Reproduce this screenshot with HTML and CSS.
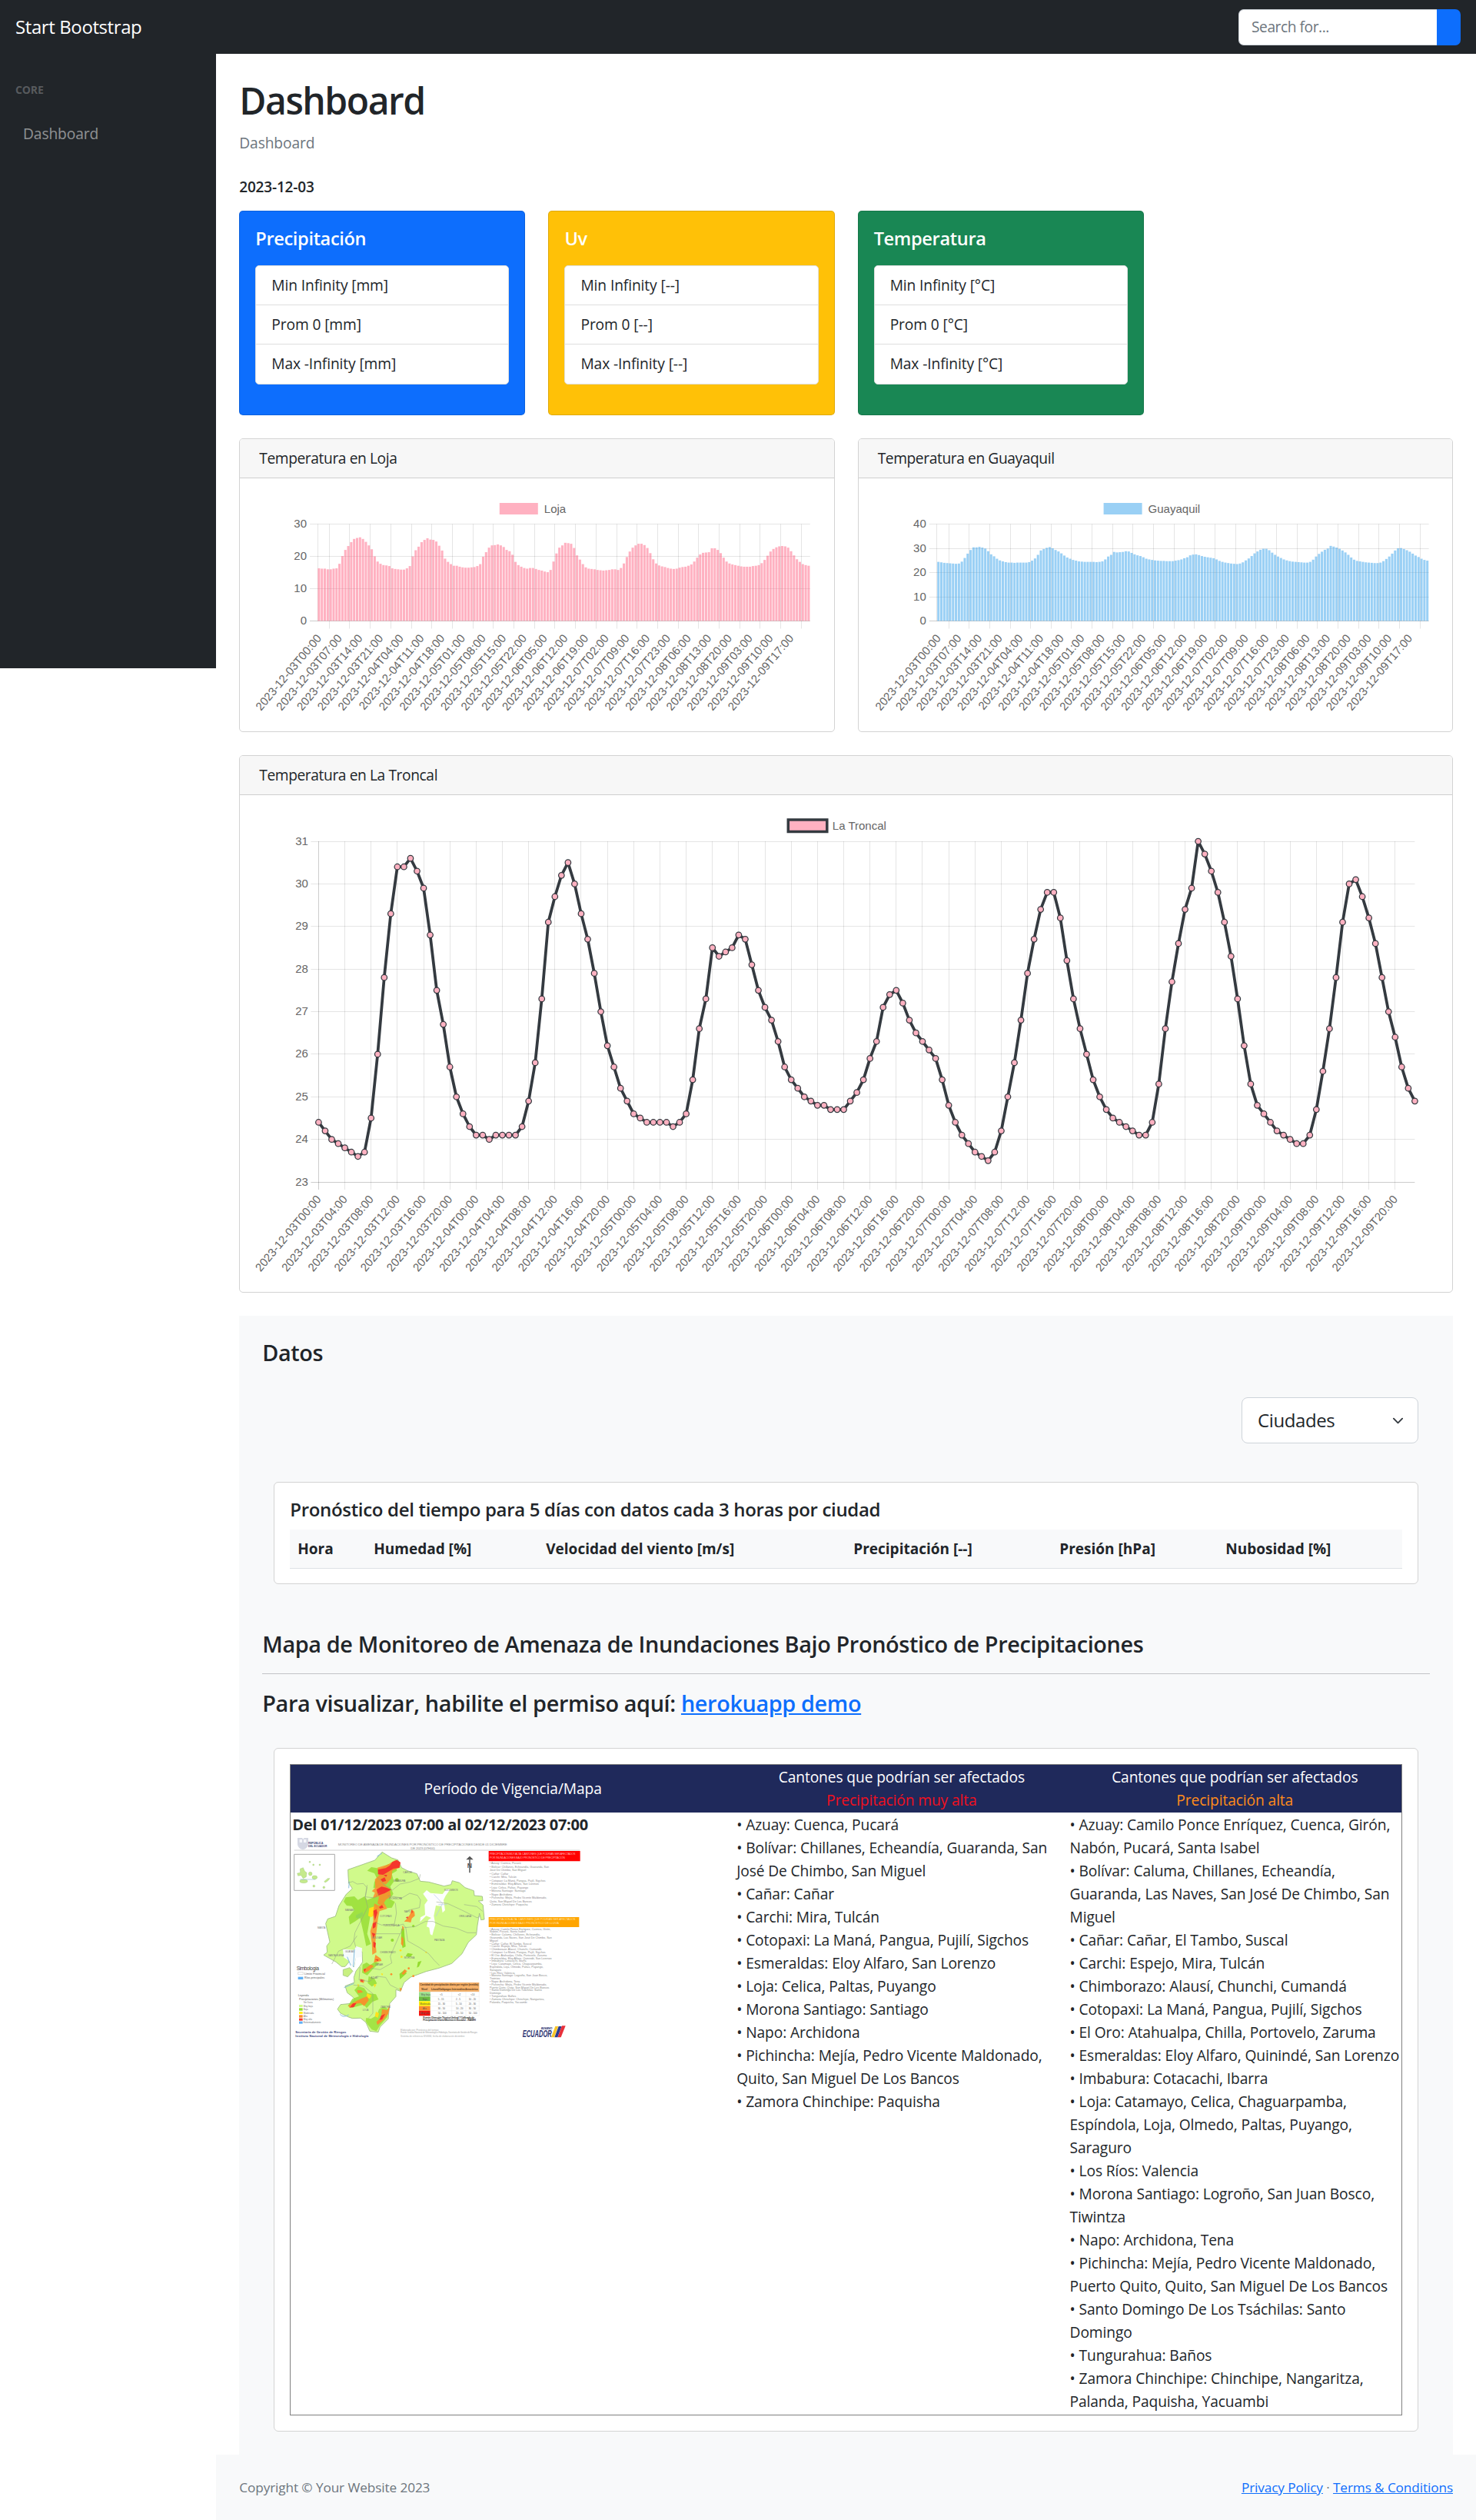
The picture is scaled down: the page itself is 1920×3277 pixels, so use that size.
FILE: index.html
```html
<!DOCTYPE html>
<html lang="es">
<head>
<meta charset="utf-8">
<title>Dashboard</title>
<link rel="stylesheet" href="styles.css">
</head>
<body>
<nav class="topnav">
  <a class="brand" href="#">Start Bootstrap</a>
  <form class="search">
    <input type="text" placeholder="Search for...">
    <button type="button" aria-label="Search"></button>
  </form>
</nav>
<div class="layout">
  <aside class="sidenav">
    <div class="sidenav-heading">Core</div>
    <a class="sidenav-link" href="#">Dashboard</a>
  </aside>
  <div class="content">
    <main>
      <h1>Dashboard</h1>
      <div class="breadcrumb">Dashboard</div>
      <h6>2023-12-03</h6>

      <div class="stats">
        <section class="stat stat-blue">
          <h5>Precipitación</h5>
          <ul><li>Min Infinity [mm]</li><li>Prom 0 [mm]</li><li>Max -Infinity [mm]</li></ul>
        </section>
        <section class="stat stat-yellow">
          <h5>Uv</h5>
          <ul><li>Min Infinity [--]</li><li>Prom 0 [--]</li><li>Max -Infinity [--]</li></ul>
        </section>
        <section class="stat stat-green">
          <h5>Temperatura</h5>
          <ul><li>Min Infinity [°C]</li><li>Prom 0 [°C]</li><li>Max -Infinity [°C]</li></ul>
        </section>
      </div>

      <div class="charts">
        <section class="card">
          <header>Temperatura en Loja</header>
          <div class="card-body"><svg id="loja" class="chart chart-bar"></svg></div>
        </section>
        <section class="card">
          <header>Temperatura en Guayaquil</header>
          <div class="card-body"><svg id="guayaquil" class="chart chart-bar"></svg></div>
        </section>
      </div>

      <section class="card card-wide">
        <header>Temperatura en La Troncal</header>
        <div class="card-body"><svg id="troncal" class="chart chart-line"></svg></div>
      </section>

      <section class="data">
        <h4>Datos</h4>
        <div class="city-select">
          <span>Ciudades</span>
          <svg viewBox="0 0 16 16" width="15" height="15"><path d="M2 5l6 6 6-6" fill="none" stroke="#343a40" stroke-width="2" stroke-linecap="round" stroke-linejoin="round"/></svg>
        </div>
        <div class="panel forecast">
          <h5>Pronóstico del tiempo para 5 días con datos cada 3 horas por ciudad</h5>
          <div class="forecast-head">
            <b>Hora</b><b>Humedad [%]</b><b>Velocidad del viento [m/s]</b><b>Precipitación [--]</b><b>Presión [hPa]</b><b>Nubosidad [%]</b>
          </div>
        </div>
        <h4>Mapa de Monitoreo de Amenaza de Inundaciones Bajo Pronóstico de Precipitaciones</h4>
        <hr>
        <h4 class="permit">Para visualizar, habilite el permiso aquí: <a href="#">herokuapp demo</a></h4>
        <div class="panel risk">
          <table>
            <thead>
              <tr>
                <th>Período de Vigencia/Mapa</th>
                <th>Cantones que podrían ser afectados<br><span class="very-high">Precipitación muy alta</span></th>
                <th>Cantones que podrían ser afectados<br><span class="high">Precipitación alta</span></th>
              </tr>
            </thead>
            <tbody>
              <tr>
                <td>
                  <b class="period">Del 01/12/2023 07:00 al 02/12/2023 07:00</b>
                  <svg class="map" viewBox="0 0 1125 795">
                    <!-- title strip -->
                    <path d="M18 6h18l4 5 4-5h16v26q-4 16-21 20-18-4-21-20z" fill="#d5d8e3"/>
                    <path d="M26 12h10v12H26zM42 12h10v12H42z" fill="#f5f6fa"/>
                    <g fill="#3c4474" font-size="10" font-weight="700"><text x="60" y="30">REPÚBLICA</text><text x="60" y="41">DEL ECUADOR</text></g>
                    <g fill="#8d8d8d" font-size="13"><text x="176" y="36" textLength="660">MONITOREO DE AMENAZA DE INUNDACIONES POR PRONÓSTICO DE PRECIPITACIONES DESDE 01 DICIEMBRE</text><text x="460" y="51" textLength="94">DE 2023 (07H00)</text></g>
                    <path d="M5 54H1120" stroke="#bbb" stroke-width="2"/>
                    <!-- Galápagos inset -->
                    <path d="M5 70H163V211H5z" fill="#fff" stroke="#a9a9a9" stroke-width="3"/>
                    <g fill="#c5ea8c" stroke="#8db86a" stroke-width="1"><path d="M28 127l12-5 6 14 8 6-2 16-12 6-8-12-12 2-3-10 12-2z"/><ellipse cx="42" cy="175" rx="15" ry="7"/><circle cx="68" cy="146" r="7"/><ellipse cx="85" cy="160" rx="10" ry="7"/><path d="M122 176l14-12 8 0-8 10-10 6z"/><circle cx="82" cy="194" r="4"/><circle cx="121" cy="199" r="4"/><circle cx="66" cy="100" r="3"/><circle cx="105" cy="111" r="3"/><circle cx="80" cy="111" r="3"/></g>
                    <path d="M28 168h60" stroke="#7aa9c9" stroke-width="1.5"/>
                    <!-- mainland -->
                    <path d="M215 130L320 93 348 61 385 84 410 92 424 122 447 134 484 146 497 175 530 178 590 194 617 188 622 173 650 181 672 200 706 212 708 231 739 234 741 251 724 252 742 268 747 324 734 326 728 300 720 348 716 384 684 414 660 458 620 496 570 514 520 527 460 549 434 570 420 604 402 598 402 625 378 652 374 690 372 712 340 744 333 764 300 760 285 726 264 709 232 710 215 704 186 690 174 674 186 656 226 652 243 636 228 622 212 610 204 584 240 570 238 550 246 526 262 505 272 490 270 450 246 462 238 510 222 486 204 508 190 508 168 490 120 463 134 452 132 428 144 412 128 340 136 322 166 312 180 270 208 226 232 204 218 182 216 156z" fill="#d0fa8b" stroke="#9aba80" stroke-width="2.5"/>
                    <path d="M196 520l26-8 12 14-20 22-18-6z" fill="#c8f081" stroke="#9aba80" stroke-width="2"/>
                    <path d="M195 440l45 3 6-15 24 8-2 34-22 4-8 36-22-26-18-12z" fill="#f6fafc"/>
                    <path d="M240 440l-4 70M212 470l14 34M200 590l38-16" stroke="#84bede" stroke-width="3" fill="none"/>
                    <path d="M246 308l26-14 2 14-14 12-14-2z" fill="#8cc9e8"/>
                    <path d="M328 78l20-12M220 176l-2 26M184 694q12 16 34 2" stroke="#8cc0dd" stroke-width="3" fill="none"/>
                    <!-- uncovered area -->
                    <path d="M508 224l14-14 15 11 47 4 14-18 16-1-18 26-8 16 6 40-10 10-4-26-22-2-8 40 6 34-6 20-6 22-8-4-4-26-10-4 6-26 12-8-20-8-24 24 2-18 18-10-2-40 12-16z" fill="#fdfefd"/>
                    <path d="M550 226l34 36-26 50M568 266h34" fill="none" stroke="#b5c9ea" stroke-width="2"/>
                    <!-- low / medium rain -->
                    <g fill="#94dc2e"><path d="M240 234l14 14 26-14 10 14 34-14 6-34-16 2 4-24 10-14-10-20-28-10 16-14 36 6 30-18 30 6 4 20-20 12 8 30-14 20 12 28-14 20 20 12-12 22-18 2-14-14-20 20-30 14-14 80 14 40-18 8-10-50-14-60-20 14-20 12-4-30 22-26-10-16-20-2-12-16 8-16z" opacity=".8"/><path d="M424 360l10 0 2 30 4 40-12 6-6-34z"/><circle cx="388" cy="405" r="6"/><circle cx="406" cy="170" r="7"/><circle cx="470" cy="350" r="5"/><path d="M448 455l20 4-10 12-18-4z"/><path d="M488 490l14-4-10 22-8 4z"/><path d="M272 500l16-8 14 10 20-14 14 6-24 24-22 24-20-10zM296 546l22 8 10 20-20 12-16-14zM240 600l14-16 24 8 14 20 32 4 10 20-24 10-22 24-12-14-44 12-18-6 18-28 26-10z" opacity=".8"/><path d="M286 708l18 4 24-14 8-24 20-10 18 12-6 30-30 34-12 20-18-6-16-20-8-14z" opacity=".75"/><path d="M416 536l18-14 10 12-26 24z"/></g>
                    <g fill="#ffe21a"><path d="M298 280l24-8 4 26-20 18-12-6z"/><path d="M290 612l16 8-6 14-14-8zM324 684l12 6-4 18-12-6zM344 534l8 2-4 8zM252 576l8 4-6 8zM316 576l10 2-8 12z"/><circle cx="420" cy="445" r="4"/><circle cx="520" cy="452" r="3"/><circle cx="424" cy="470" r="4"/></g>
                    <g fill="#fb8d2b"><path d="M330 122l40-12 30-18 18 8-2 22-28 12-4 30-22 24-14-6 30 22 4 30-20 14-14 24-18-10 6-28-24 6 8-20-12-6 14-14-2-32 16-16z" opacity=".85"/><path d="M318 262l18 8 20-10 12 22-30 10-6 30-6 50-4 40 4 40-16 10-2-46-6-46 12-40-2-24z" opacity=".85"/><path d="M322 462l20 14 4 10-30 6zM304 500l12 6-20 18-16 10-6-12zM262 556l18 4-4 12-14-4zM268 632l22-8 6 16-18 22-14-12-22 4-20 16-6-10 28-16zM250 600l16 0 8 8-20 4zM348 674l20 4 12-22-8 36-20 26-22 18-4-12 18-18zM464 284l10 10 2 16-12 10-4 16-10-2-16-2 12-12 10-14zM424 390l8 10-2 30-8-10zM426 348l8 8-6 14zM436 518l10 8-14 14-8-4zM416 590l10 4-6 12z" opacity=".92"/><circle cx="470" cy="545" r="4"/><circle cx="452" cy="515" r="4"/><circle cx="384" cy="538" r="4"/></g>
                    <g fill="#f5352d"><path d="M332 130l30-6 16-10 10-14 18-8 14 10-4 20-24 4-16 10-24 14-20-2zM326 208l20-12 18 4 20 8-26 14-24 8zM342 168l16-8 6 14-14 4zM354 150l14 0-4 8z"/><path d="M314 290l12-6 4 14-10 30zM312 340l14-8-4 22-10 6zM308 376l14 4-8 16zM314 410l10 6-4 20-6-6zM336 276l12-8 6 10-14 4zM264 558l10 2-2 8-8-4zM234 652l14-2-10 16-16 2zM344 700l16-8-12 22-10 2zM462 286l6 8-4 8zM440 318l8-6 2 8zM276 518l10-2-6 12zM320 480l14 0-2 6z"/></g>
                    <!-- provinces -->
                    <g fill="none" stroke="#8f9f86" stroke-width="1.6"><path d="M215 182l18-6 18 10 24-2 14 16-6 36 36 4 20-20"/><path d="M330 160l28 30 30 20 30-24 40-8 36-14 3-16"/><path d="M290 190l-8 46 10 40-30 60-20 40-4 30 8 28"/><path d="M370 232l56 8 30-18 30 8 12 18-4 30-44 10"/><path d="M400 260l4 40-8 42-50 4-24-10"/><path d="M405 350l26-8 6 14 40-4 40-20 30 0 40 18 50 8 44 18 34 0"/><path d="M320 380l100 0 8-24"/><path d="M440 352l8 56 46 26 36 24 22 26 20 20"/><path d="M418 380l-26 60-12 28 6 26-46 26-36-6"/><path d="M560 256l44 6 56 26 60 30 10-8"/><path d="M668 266l50 8 22 18"/><path d="M250 388l-26 40-46 20-26 50"/><path d="M262 510l-4 50 40 6 30-20 34 4 18 30 40 20"/><path d="M236 580l40 4 36 30 0 76-18 20"/></g>
                    <g fill="#777" font-size="9"><text x="204" y="290">MANABÍ</text><text x="430" y="144">CARCHI</text><text x="392" y="177">IMBABURA</text><text x="376" y="246">PICHINCHA</text><text x="590" y="213">SUCUMBÍOS</text><text x="648" y="316">ORELLANA</text><text x="552" y="408">PASTAZA</text><text x="434" y="477">MORONA</text><text x="434" y="297">NAPO</text><text x="340" y="314">COTOPAXI</text><text x="352" y="351">TUNGURAHUA</text><text x="310" y="399">BOLÍVAR</text><text x="340" y="456">CHIMBORAZO</text><text x="204" y="453">GUAYAS</text><text x="138" y="468">SANTA ELENA</text><text x="320" y="503">CAÑAR</text><text x="304" y="555">AZUAY</text><text x="272" y="681">LOJA</text><text x="342" y="670">ZAMORA</text><text x="96" y="360">MANTA</text></g>
                    <!-- compass -->
                    <path d="M690 77l14 14H676z" fill="#555"/><path d="M690 88V142" stroke="#666" stroke-width="5"/><text x="680" y="122" font-size="26" font-weight="700" fill="#555">N</text>
                    <!-- lists -->
                    <path fill="#f00" d="M764 57H1121V97H764z"/>
                    <g fill="#ffb0b0" font-size="11"><text x="768" y="72" textLength="334">PRECIPITACIÓN MUY ALTA: CANTONES QUE PODRÍAN SER AFECTADOS</text><text x="768" y="87" textLength="294">POR INUNDACIONES BAJO PRONÓSTICO DE PRECIPITACIÓN</text></g>
                    <g id="list-very-high" class="map-list"></g>
                    <path fill="#ffa500" d="M764 315H1117V354H764z"/>
                    <g fill="#ffe0a8" font-size="11"><text x="768" y="328" textLength="334">PRECIPITACIÓN ALTA: CANTONES QUE PODRÍAN SER AFECTADOS</text><text x="768" y="343" textLength="270">POR INUNDACIONES BAJO PRONÓSTICO DE LLUVIA</text></g>
                    <g id="list-high" class="map-list"></g>
                    <!-- legend -->
                    <text x="14" y="521" font-size="20" fill="#444" textLength="88">Simbología</text>
                    <path d="M20 530h20v9H20z" fill="#fff" stroke="#999"/><path d="M20 548h20v10H20z" fill="#5fb0f5"/>
                    <g fill="#555" font-size="11"><text x="45" y="539">Límite Provincial</text><text x="45" y="556">Ríos principales</text><text x="20" y="625">Leyenda</text><text x="24" y="640">Precipitaciones (Milímetros)</text></g>
                    <path fill="#d0fa8b" d="M24 657h14v9H24z"/><path fill="#94dc2e" d="M24 670h14v10H24z"/><path fill="#ffee1a" d="M24 684h14v9H24z"/><path fill="#fb8d2b" d="M24 697h14v10H24z"/><path fill="#f5352d" d="M24 710h14v9H24z"/><path fill="#5fb0f5" d="M24 722h14v9H24z"/>
                    <g fill="#777" font-size="9"><text x="41" y="652">Sin lluvia</text><text x="41" y="665">Muy baja</text><text x="41" y="678">Baja</text><text x="41" y="692">Moderada</text><text x="41" y="705">Alta</text><text x="41" y="718">Muy alta</text><text x="41" y="730">Extremadamente</text></g>
                    <g fill="#39417a" font-size="12" font-weight="700"><text x="10" y="769" textLength="198">Secretaría de Gestión de Riesgos</text><text x="10" y="783" textLength="285">Instituto Nacional de Meteorología e Hidrología</text></g>
                    <!-- threshold table -->
                    <path fill="#f6b26b" d="M492 570H727V607H492z"/><path fill="#fff" stroke="#ddd" d="M536 607H727V700H536zM536 625H727M536 643H727M536 662H727M536 680H727M620 607V700M675 607V700"/>
                    <path fill="#9be08a" d="M492 607h44v18h-44z"/><path fill="#6cbd3f" d="M492 625h44v18h-44z"/><path fill="#fff200" d="M492 643h44v19h-44z"/><path fill="#fb8d2b" d="M492 662h44v18h-44z"/><path fill="#f3140f" d="M492 680h44v20h-44z"/>
                    <g fill="#5b3a1e" font-size="10" font-weight="700"><text x="496" y="581" textLength="228">Cantidad de precipitación diaria por región (mm/día)</text><text x="502" y="599">Nivel</text><text x="540" y="599" textLength="182">Litoral/Galápagos Interandina Amazónica</text></g>
                    <g fill="#555" font-size="9"><text x="500" y="620">Muy baja</text><text x="506" y="638">Baja</text><text x="496" y="656">Moderada</text><text x="506" y="675">Alta</text><text x="498" y="694">Muy alta</text><text x="574" y="620">&lt;5</text><text x="644" y="620">&lt;2</text><text x="694" y="620">&lt;10</text><text x="566" y="638">5 - 15</text><text x="636" y="638">2 - 5</text><text x="686" y="638">10 - 20</text><text x="566" y="656">15 - 30</text><text x="636" y="656">5 - 10</text><text x="686" y="656">20 - 30</text><text x="566" y="675">30 - 50</text><text x="636" y="675">10 - 20</text><text x="686" y="675">30 - 50</text><text x="566" y="694">50 - 100</text><text x="636" y="694">20 - 50</text><text x="686" y="694">50 - 100</text></g>
                    <g fill="#333" font-size="10" font-weight="700"><text x="508" y="710" textLength="200">Fuente: Dirección Técnica Umbral 7 Calibrado de</text><text x="508" y="721" textLength="206">Precipitación Diaria Máxima en Ecuador - INAMHI</text></g>
                    <g fill="#aaa" font-size="9"><text x="420" y="758">Elaborado por: Pronóstico del tiempo</text><text x="420" y="769" textLength="300">Fuente: Instituto Nacional de Meteorología e Hidrología, Secretaría de Gestión de Riesgos</text><text x="420" y="784" textLength="250">Sistema de referencia WGS84, fecha de elaboración diciembre</text></g>
                    <!-- logo -->
                    <text x="968" y="752" font-size="13" font-style="italic" font-weight="700" fill="#39417a" textLength="44">EL NUEVO</text>
                    <text x="896" y="783" font-size="36" font-style="italic" font-weight="700" fill="#2c3270" textLength="114" lengthAdjust="spacingAndGlyphs">ECUADOR</text>
                    <path fill="#f7c52b" d="M1024 741h12l-16 43h-12z"/><path fill="#2a3c8f" d="M1037 741h12l-16 43h-12z"/><path fill="#e8303a" d="M1050 739h14l-18 45h-13z"/>
                  </svg>
                </td>
                <td id="very-high">• Azuay: Cuenca, Pucará<br>• Bolívar: Chillanes, Echeandía, Guaranda, San<br>José De Chimbo, San Miguel<br>• Cañar: Cañar<br>• Carchi: Mira, Tulcán<br>• Cotopaxi: La Maná, Pangua, Pujilí, Sigchos<br>• Esmeraldas: Eloy Alfaro, San Lorenzo<br>• Loja: Celica, Paltas, Puyango<br>• Morona Santiago: Santiago<br>• Napo: Archidona<br>• Pichincha: Mejía, Pedro Vicente Maldonado,<br>Quito, San Miguel De Los Bancos<br>• Zamora Chinchipe: Paquisha</td>
                <td id="high">• Azuay: Camilo Ponce Enríquez, Cuenca, Girón,<br>Nabón, Pucará, Santa Isabel<br>• Bolívar: Caluma, Chillanes, Echeandía,<br>Guaranda, Las Naves, San José De Chimbo, San<br>Miguel<br>• Cañar: Cañar, El Tambo, Suscal<br>• Carchi: Espejo, Mira, Tulcán<br>• Chimborazo: Alausí, Chunchi, Cumandá<br>• Cotopaxi: La Maná, Pangua, Pujilí, Sigchos<br>• El Oro: Atahualpa, Chilla, Portovelo, Zaruma<br>• Esmeraldas: Eloy Alfaro, Quinindé, San Lorenzo<br>• Imbabura: Cotacachi, Ibarra<br>• Loja: Catamayo, Celica, Chaguarpamba,<br>Espíndola, Loja, Olmedo, Paltas, Puyango,<br>Saraguro<br>• Los Ríos: Valencia<br>• Morona Santiago: Logroño, San Juan Bosco,<br>Tiwintza<br>• Napo: Archidona, Tena<br>• Pichincha: Mejía, Pedro Vicente Maldonado,<br>Puerto Quito, Quito, San Miguel De Los Bancos<br>• Santo Domingo De Los Tsáchilas: Santo<br>Domingo<br>• Tungurahua: Baños<br>• Zamora Chinchipe: Chinchipe, Nangaritza,<br>Palanda, Paquisha, Yacuambi</td>
              </tr>
            </tbody>
          </table>
        </div>
      </section>
    </main>
    <footer class="footer">
      <span>Copyright © Your Website 2023</span>
      <span><a href="#">Privacy Policy</a> · <a href="#">Terms &amp; Conditions</a></span>
    </footer>
  </div>
</div>
<script src="charts.js"></script>
</body>
</html>
```
FILE: styles.css
```css
* { box-sizing: border-box; }
html { font-size: 20px; }
body {
  margin: 0;
  background: #fff;
  color: #212529;
  font: 400 0.96rem/1.5rem "Open Sans", "Noto Sans", sans-serif;
  letter-spacing: -0.1px;
}
h1, h4, h5, h6 { margin: 0; font-weight: 600; line-height: 1.2; }
ul { list-style: none; margin: 0; padding: 0; }
a { color: #0d6efd; }
.topnav {
  display: flex; align-items: center; justify-content: space-between;
  height: 70px; padding: 0 20px; background: #212529;
}
.brand { color: #fff; font-size: 1.2rem; letter-spacing: -0.4px; text-decoration: none; }
.search { display: flex; height: 47px; }
.search input {
  width: 258px; padding: 0 16px; border: 1px solid #ced4da; border-right: 0;
  border-radius: 7px 0 0 7px; background: #fff; color: #212529;
  font: inherit; letter-spacing: -0.45px;
}
.search input::placeholder { color: #6c757d; opacity: 1; }
.search button { width: 31px; padding: 0; border: 0; border-radius: 0 7px 7px 0; background: #0d6efd; }

.layout { display: grid; grid-template-columns: 281.25px minmax(0, 1fr); align-items: start; }
.sidenav { height: 799px; background: #212529; }
.sidenav-heading {
  padding: 36px 20px 15px; color: rgba(255, 255, 255, .25);
  font-size: 0.7rem; font-weight: 700; line-height: 22.5px; text-transform: uppercase;
}
.sidenav-link { display: block; padding: 15px 30px; color: rgba(255, 255, 255, .5); text-decoration: none; }

main { padding: 31px 30px 0; }
h1 { height: 70px; font-size: 2.4rem; line-height: 60px; letter-spacing: -0.03em; }
.breadcrumb { margin-bottom: 29px; color: #6c757d; }
h6 { height: 44px; font-size: 0.95rem; line-height: 26px; letter-spacing: -0.18px; }

.stats { display: grid; grid-template-columns: repeat(4, 1fr); gap: 30px; margin-bottom: 30px; }
.stat { height: 266px; padding: 20px; border: 1px solid rgba(0, 0, 0, .125); border-radius: 5px; background-clip: border-box; }
.stat-blue { background-color: #0d6efd; }
.stat-yellow { background-color: #ffc107; }
.stat-green { background-color: #198754; }
.stat h5 { height: 50px; color: #fff; font-size: 1.18rem; letter-spacing: -0.35px; line-height: 31px; }
.stat ul { border: 1px solid #dfdfdf; border-radius: 5px; background: #fff; overflow: hidden; }
.stat li { height: 51px; padding: 10px 20px; border-bottom: 1px solid #dfdfdf; }
.stat li:last-child { border-bottom: 0; }

.charts { display: grid; grid-template-columns: 1fr 1fr; gap: 30px; margin-bottom: 30px; }
.card { border: 1px solid #d3d3d3; border-radius: 5px; background: #fff; overflow: hidden; }
.card header { height: 51px; padding: 10px 25px; border-bottom: 1px solid #cfcfcf; background: #f7f7f7; letter-spacing: -0.4px; }
.card-body { padding: 20px; }
.chart { display: block; width: 100%; overflow: visible; font-family: "Liberation Sans", Arial, sans-serif; font-size: 15px; letter-spacing: 0; }
.chart text { fill: #666; }
.chart-bar { height: 289px; }
.chart-line { height: 606px; }
.card-wide { margin-bottom: 30px; }

.data { padding: 30px; background: #f8f9fa; }
h4 { font-size: 1.44rem; line-height: 36px; letter-spacing: -0.36px; }
.city-select {
  display: flex; align-items: center; justify-content: space-between;
  width: 230px; height: 60px; margin: 40px 15px 50px auto; padding: 0 18px 0 20px;
  border: 1px solid #ced4da; border-radius: 8px; background: #fff; font-size: 1.2rem; letter-spacing: -0.4px;
}
.panel { margin: 0 15px; padding: 20px; border: 1px solid #d3d3d3; border-radius: 6px; background: #fff; }
.forecast { height: 133px; margin-bottom: 60px; }
.forecast h5 { height: 41px; font-size: 1.2rem; line-height: 30px; letter-spacing: -0.32px; }
.forecast-head {
  display: grid; grid-template-columns: 99px 224px 400px 268px 216px 1fr;
  height: 51px; padding: 10px; border-bottom: 1px solid #dee2e6; background: #f8f9fa;
}
.forecast-head b { font-weight: 700; font-size: .95rem; letter-spacing: 0; }
hr { height: 1px; margin: 20px 0; border: 0; background: #c2c4c7; }
.permit { margin-bottom: 40px; }
.risk table { width: 100%; height: 847px; table-layout: fixed; border: 1px solid gray; border-spacing: 0; }
.risk th { height: 62px; padding: 1px; background: #1f295b; color: #fff; font-weight: 400; line-height: 30px; }
.risk th:first-child { width: 40%; }
.risk td { padding: 1px 1px 1px 2px; vertical-align: top; line-height: 30px; white-space: nowrap; }
.very-high { color: #f01020; }
.high { color: #ff8c1a; }
.period { display: block; font-size: 1rem; font-weight: 700; letter-spacing: -0.28px; }
.map { display: block; width: 375px; height: 265px; margin-left: 1px; letter-spacing: 0; font-family: "Liberation Sans", Arial, sans-serif; }
.map-list { fill: #8a8a8a; font-size: 11px; }

.footer {
  display: flex; justify-content: space-between; height: 85px; padding: 30px;
  background: #f8f9fa; color: #6c757d; font-size: 0.86rem; line-height: 26px;
}
```
FILE: charts.js
```js
const NS = 'http://www.w3.org/2000/svg';

const loja = [
  16.3,16.2,16.2,16.0,16.0,16.2,16.3,17.7,20.1,22.0,23.2,24.4,25.4,25.7,25.9,25.4,24.5,23.4,22.2,20.0,18.4,17.7,17.3,17.2,
  17.0,16.3,16.1,16.0,15.9,15.9,16.3,17.0,20.0,21.9,23.0,24.4,25.1,25.6,25.2,25.1,24.6,23.3,21.8,19.3,18.3,17.6,17.1,17.1,
  16.8,16.6,16.5,16.5,16.6,16.7,17.0,17.6,19.9,21.3,22.7,23.4,23.5,23.7,23.4,22.9,22.0,21.6,20.5,18.3,17.3,16.8,16.4,16.2,
  16.4,16.4,16.1,15.8,15.6,15.3,15.1,15.8,18.4,20.9,22.7,23.4,24.2,24.1,23.9,22.6,20.3,19.0,17.6,16.6,16.2,16.1,16.0,15.8,
  15.7,15.6,15.7,15.8,16.0,16.0,15.8,16.4,17.8,19.8,21.5,22.7,23.4,23.9,23.9,23.5,22.6,21.0,19.1,17.8,17.2,16.9,16.7,16.4,
  16.2,16.1,16.2,16.5,16.7,16.8,17.1,17.5,18.4,19.6,20.6,21.1,21.2,21.3,22.5,22.5,22.0,21.0,19.6,18.4,17.8,17.5,17.3,17.1,
  16.9,16.8,16.8,16.8,17.0,17.1,17.3,17.9,18.9,20.2,21.5,22.3,22.8,23.1,23.2,23.1,22.7,21.6,20.3,19.1,18.3,17.6,17.3,17.1
];
const coast = [
  24.4,24.2,24.0,23.9,23.8,23.7,23.6,23.7,24.5,26.0,27.8,29.3,30.4,30.4,30.6,30.3,29.9,28.8,27.5,26.7,25.7,25.0,24.6,24.3,
  24.1,24.1,24.0,24.1,24.1,24.1,24.1,24.3,24.9,25.8,27.3,29.1,29.7,30.2,30.5,30.0,29.3,28.7,27.9,27.0,26.2,25.7,25.2,24.9,
  24.6,24.5,24.4,24.4,24.4,24.4,24.3,24.4,24.6,25.4,26.6,27.3,28.5,28.3,28.4,28.5,28.8,28.7,28.1,27.5,27.1,26.8,26.3,25.7,
  25.4,25.2,25.0,24.9,24.8,24.8,24.7,24.7,24.7,24.9,25.1,25.4,25.9,26.3,27.1,27.4,27.5,27.2,26.8,26.5,26.3,26.1,25.9,25.4,
  24.8,24.4,24.1,23.9,23.7,23.6,23.5,23.7,24.2,25.0,25.8,26.8,27.9,28.7,29.4,29.8,29.8,29.2,28.2,27.3,26.6,26.0,25.4,25.0,
  24.7,24.5,24.4,24.3,24.2,24.1,24.1,24.4,25.3,26.6,27.7,28.6,29.4,29.9,31.0,30.7,30.3,29.8,29.1,28.3,27.3,26.2,25.3,24.8,
  24.6,24.4,24.2,24.1,24.0,23.9,23.9,24.1,24.7,25.6,26.6,27.8,29.1,30.0,30.1,29.7,29.2,28.6,27.8,27.0,26.4,25.7,25.2,24.9
];

function add(svg, name, attrs, text) {
  const el = document.createElementNS(NS, name);
  for (const key in attrs) el.setAttribute(key, attrs[key]);
  if (text !== undefined) el.textContent = text;
  svg.appendChild(el);
  return el;
}
function line(svg, x1, y1, x2, y2, alpha) {
  const snap = v => Math.floor(v) + 0.5;
  if (x1 === x2) x1 = x2 = snap(x1); else y1 = y2 = snap(y1);
  add(svg, 'path', { d: `M${x1} ${y1}L${x2} ${y2}`, stroke: `rgba(0,0,0,${alpha})`, fill: 'none' });
}
function stamp(i) {
  const two = n => String(n).padStart(2, '0');
  return `2023-12-${two(3 + Math.floor(i / 24))}T${two(i % 24)}:00`;
}
function tickLabel(svg, x, y, i) {
  add(svg, 'text', { transform: `translate(${x} ${y}) rotate(-50)`, 'text-anchor': 'end', dy: '.35em' }, stamp(i));
}

function barChart(id, data, o) {
  const svg = document.getElementById(id);
  const top = 39.5, bottom = 165.5, step = (o.right - o.left) / data.length;
  for (let v = 0; v <= o.max; v += 10) {
    const y = bottom - (bottom - top) * v / o.max;
    line(svg, o.left - 10, y, o.right, y, v ? .1 : .2);
    add(svg, 'text', { x: o.left - 14, y: y + 4.5, 'text-anchor': 'end' }, v);
  }
  line(svg, o.left, top, o.left, bottom, .1);
  for (let i = 4; i < data.length; i += 7) line(svg, o.left + i * step, top, o.left + i * step, bottom + 10, .1);
  data.forEach((v, i) => {
    const h = (bottom - top) * v / o.max;
    add(svg, 'rect', { x: o.left + i * step + step * .1, y: bottom - h, width: step * .8, height: h, fill: o.fill });
  });
  for (let i = 0; i < data.length; i += 7) tickLabel(svg, o.left + (i + .5) * step, bottom + 19.5, i);
  add(svg, 'rect', { x: o.legend, y: 12, width: 50, height: 15, fill: o.fill });
  add(svg, 'text', { x: o.legend + 58, y: 24.5 }, o.name);
}

function lineChart(id, data, o) {
  const svg = document.getElementById(id);
  const step = (o.right - o.left) / (data.length - 1);
  const px = i => o.left + i * step;
  const py = v => o.top + (31 - v) * (o.bottom - o.top) / 8;
  for (let v = 23; v <= 31; v++) {
    line(svg, o.left - 10, py(v), o.right, py(v), v === 23 ? .2 : .1);
    add(svg, 'text', { x: o.left - 13.5, y: py(v) + 4.5, 'text-anchor': 'end' }, v);
  }
  for (let i = 0; i < data.length; i += 4) {
    line(svg, px(i), o.top, px(i), o.bottom + 10, i ? .1 : .2);
    tickLabel(svg, px(i), o.bottom + 19.5, i);
  }
  add(svg, 'path', { d: 'M' + data.map((v, i) => `${px(i)} ${py(v)}`).join('L'), fill: 'none', stroke: '#343a40', 'stroke-width': 3.75, 'stroke-linejoin': 'round' });
  data.forEach((v, i) => add(svg, 'circle', { cx: px(i), cy: py(v), r: 3.75, fill: '#ffb1c1', stroke: '#343a40', 'stroke-width': 1.25 }));
  add(svg, 'rect', { x: o.legend, y: 12, width: 50.5, height: 15.5, fill: '#ffb1c1', stroke: '#343a40', 'stroke-width': 3.5 });
  add(svg, 'text', { x: o.legend + 57.5, y: 24.5 }, o.name);
}

barChart('loja', loja, { left: 81, right: 721.8, max: 30, fill: 'rgba(255,99,132,.5)', legend: 317.8, name: 'Loja' });
barChart('guayaquil', coast, { left: 81.8, right: 721.6, max: 40, fill: 'rgba(54,162,235,.5)', legend: 298.6, name: 'Guayaquil' });
lineChart('troncal', coast, { left: 82.4, right: 1508.4, top: 40, bottom: 483, legend: 693.3, name: 'La Troncal' });

/* The map repeats both canton lists in small print. */
function mapList(from, to, y, step) {
  const target = document.getElementById(to);
  document.getElementById(from).innerHTML.split('<br>').forEach((t, i) => add(target, 'text', { x: 768, y: y + i * step }, t));
}
mapList('very-high', 'list-very-high', 108, 13.6);
mapList('high', 'list-high', 365, 11.4);
```
